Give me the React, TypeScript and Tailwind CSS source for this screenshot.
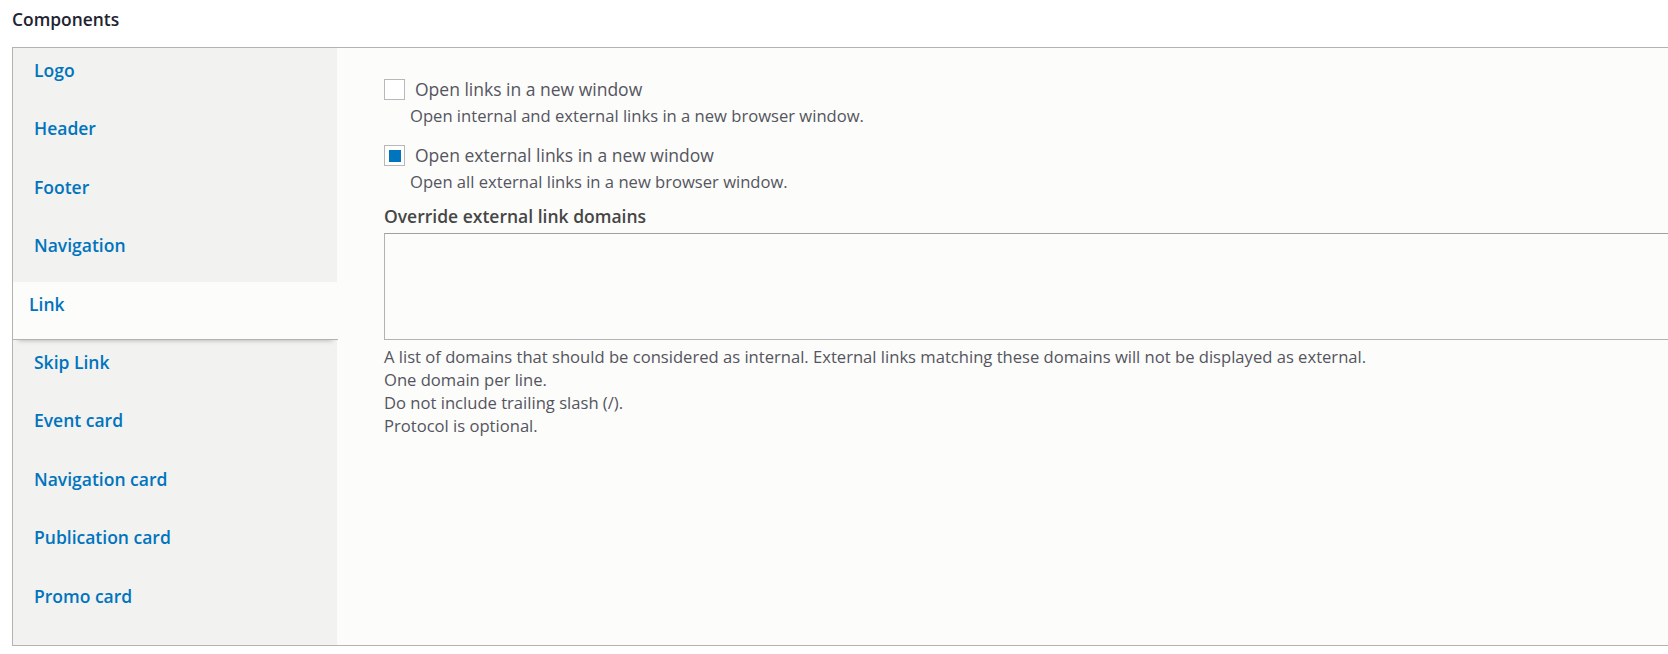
const tabs = [
  "Logo",
  "Header",
  "Footer",
  "Navigation",
  "Link",
  "Skip Link",
  "Event card",
  "Navigation card",
  "Publication card",
  "Promo card",
];

function Checkbox({ checked }: { checked?: boolean }) {
  return (
    <span className="flex h-[21px] w-[21px] shrink-0 items-center justify-center border border-[#b8b8b8] bg-white">
      {checked && <span className="h-[12px] w-[12px] bg-[#0074bd]" />}
    </span>
  );
}

export default function App() {
  return (
    <div
      className="h-[654px] overflow-hidden bg-white"
      style={{ fontFamily: '"Open Sans", "Liberation Sans", sans-serif' }}
    >
      <h2 className="pl-[12px] pt-[7px] text-[17.4px] font-semibold leading-[25px] text-[#222330]">
        Components
      </h2>

      <div className="ml-[12px] mt-[15px] flex w-[1700px] border border-[#b3b3b3]">
        {/* vertical tabs menu */}
        <ul className="w-[324px] shrink-0 bg-[#f2f2f0] pb-[13px]">
          {tabs.map((tab) => {
            const active = tab === "Link";
            return (
              <li
                key={tab}
                className={
                  active
                    ? "relative z-10 -mr-px h-[58.4px] border-b border-[#b3b3b3] bg-[#fcfcfa] pl-[16px] pt-[10px] shadow-[0_5px_5px_-5px_rgba(0,0,0,0.3)]"
                    : "h-[58.4px] pl-[21px] pt-[10px]"
                }
              >
                <a className="text-[17.5px] font-semibold leading-[25px] text-[#0074bd]">
                  {tab}
                </a>
              </li>
            );
          })}
        </ul>

        {/* tab pane */}
        <div className="flex-1 bg-[#fcfcfa] pl-[47px] pt-[29px]">
          <div className="flex items-center gap-[10px]">
            <Checkbox />
            <span className="text-[17.5px] leading-[25px] text-[#545560]">
              Open links in a new window
            </span>
          </div>
          <p className="mt-[1px] pl-[26px] text-[16.6px] leading-[25px] text-[#545560]">
            Open internal and external links in a new browser window.
          </p>

          <div className="mt-[15px] flex items-center gap-[10px]">
            <Checkbox checked />
            <span className="text-[17.5px] leading-[25px] text-[#545560]">
              Open external links in a new window
            </span>
          </div>
          <p className="mt-[1px] pl-[26px] text-[16.6px] leading-[25px] text-[#545560]">
            Open all external links in a new browser window.
          </p>

          <label className="mt-[10px] block text-[17.5px] font-semibold leading-[25px] text-[#464646]">
            Override external link domains
          </label>
          <textarea className="mt-[4px] block h-[107px] w-full resize-none border border-[#b3b3b3] border-t-[#a0a0a0] bg-[#fcfcfa]" />
          <div className="mt-[5px] text-[16.6px] leading-[23px] text-[#545560]">
            <p>
              A list of domains that should be considered as internal. External
              links matching these domains will not be displayed as external.
            </p>
            <p>One domain per line.</p>
            <p>Do not include trailing slash (/).</p>
            <p>Protocol is optional.</p>
          </div>
        </div>
      </div>
    </div>
  );
}
